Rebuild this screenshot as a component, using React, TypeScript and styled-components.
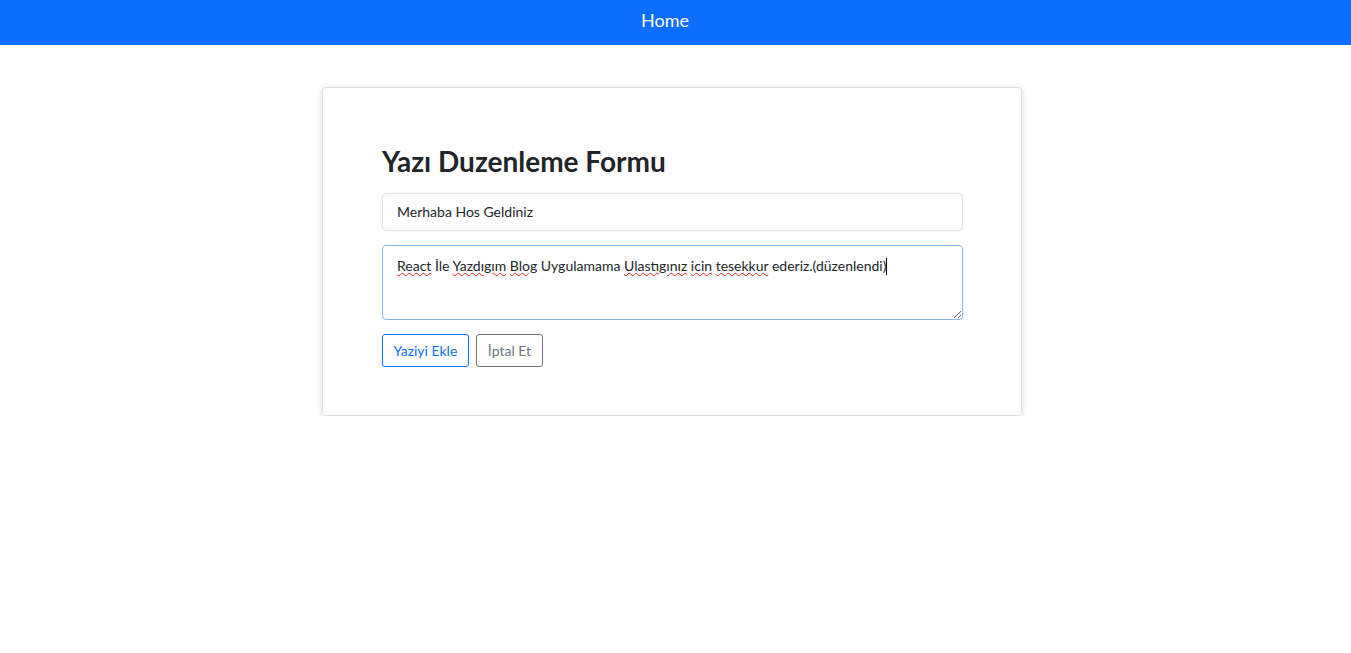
import React from "react";
import styled, { createGlobalStyle } from "styled-components";

const Global = createGlobalStyle`
  * { box-sizing: border-box; }
  body { margin: 0; font-family: Lato, "Noto Sans", sans-serif; color: #212529; background: #fff; }
`;

const NavBar = styled.nav`
  height: 45px;
  padding-bottom: 5px;
  background: #0d6efd;
  display: flex;
  align-items: center;
  justify-content: center;
`;

const NavLink = styled.a`
  color: #fff;
  font-size: 18px;
  text-decoration: none;
  margin-right: 21px;
`;

const Page = styled.main`
  display: flex;
  justify-content: center;
  padding-top: 42px;
`;

const Card = styled.section`
  width: 700px;
  margin-left: -7px;
  border: 1px solid #dcdcdc;
  border-radius: 4px;
  box-shadow: 0 2px 6px rgba(0, 0, 0, 0.16);
  padding: 57px 58px 48px 59px;
  display: flex;
  flex-direction: column;
`;

const Title = styled.h2`
  margin: 0 0 14px;
  font-size: 28px;
  font-weight: 700;
  line-height: 1.2;
  color: #212529;
`;

const TextInput = styled.input`
  height: 38px;
  border: 1px solid #dee2e6;
  border-radius: 4px;
  padding: 0 14px;
  font-family: inherit;
  font-size: 14px;
  color: #212529;
  outline: none;
  margin-bottom: 14px;
`;

const TextBox = styled.div`
  height: 75px;
  border: 1px solid #86b7e8;
  border-radius: 4px;
  padding: 9px 14px;
  font-size: 14px;
  line-height: 1.5;
  color: #212529;
  overflow: auto;
  resize: vertical;
  margin-bottom: 14px;
`;

const Misspelled = styled.span`
  text-decoration: underline wavy #d9261c;
  text-decoration-thickness: 1px;
  text-underline-offset: 1px;
`;

const Caret = styled.span`
  display: inline-block;
  width: 1px;
  height: 17px;
  background: #000;
  vertical-align: -4px;
`;

const Actions = styled.div`
  display: flex;
  gap: 7px;
`;

const Button = styled.button<{ $tone: "primary" | "secondary" }>`
  height: 33px;
  padding: 0 ${(p) => (p.$tone === "primary" ? "10.5px" : "11px")};
  background: #fff;
  border-radius: 3px;
  font-family: inherit;
  font-size: 14px;
  border: 1px solid ${(p) => (p.$tone === "primary" ? "#0d6efd" : "#6c757d")};
  color: ${(p) => (p.$tone === "primary" ? "#0d6efd" : "#6c757d")};
  cursor: pointer;
`;

export default function App() {
  return (
    <>
      <Global />
      <NavBar>
        <NavLink href="#">Home</NavLink>
      </NavBar>
      <Page>
        <Card>
          <Title>Yazı Duzenleme Formu</Title>
          <TextInput defaultValue="Merhaba Hos Geldiniz" />
          <TextBox>
            <Misspelled>React</Misspelled> İle <Misspelled>Yazdıgım</Misspelled>{" "}
            <Misspelled>Blog</Misspelled> Uygulamama <Misspelled>Ulastıgınız</Misspelled>{" "}
            <Misspelled>icin</Misspelled> <Misspelled>tesekkur</Misspelled> ederiz.(düzenlendi)
            <Caret />
          </TextBox>
          <Actions>
            <Button $tone="primary">Yaziyi Ekle</Button>
            <Button $tone="secondary">İptal Et</Button>
          </Actions>
        </Card>
      </Page>
    </>
  );
}
